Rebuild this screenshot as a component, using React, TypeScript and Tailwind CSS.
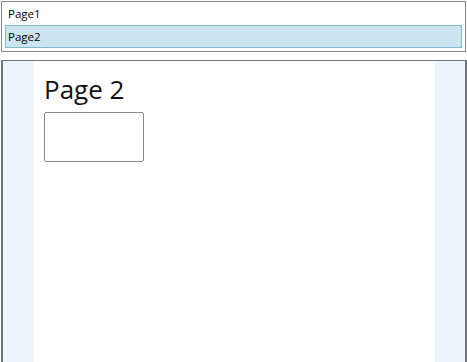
export default function App() {
  return (
    <div
      className="flex h-[362px] w-[467px] flex-col overflow-hidden bg-white"
      style={{ fontFamily: '"Open Sans", "Liberation Sans", sans-serif' }}
    >
      <div className="mt-px ml-px h-[51px] w-[465px] border border-[#828790] bg-white px-[3px] pt-[1px]">
        <div className="flex h-[21px] items-center pl-[3px] text-[11.5px] text-black">Page1</div>
        <div className="mt-px flex h-[23px] items-center border border-[#80b9d0] bg-[#cce6f1] pl-[2px] text-[11.5px] text-black">
          Page2
        </div>
      </div>
      <div className="mt-[8px] ml-px flex min-h-0 w-[466px] flex-1 border-t border-r-2 border-l-2 border-[#6f7479]">
        <div className="w-[31px] bg-[#eef6fd]" />
        <div className="flex-1 bg-white pl-[10px] pt-[10px]">
          <div className="text-[26px] leading-[36px] text-[#111]">Page 2</div>
          <div className="mt-[5px] h-[50px] w-[100px] rounded-[2px] border border-[#8a8a8a] bg-white" />
        </div>
        <div className="w-[30px] bg-[#eef6fd]" />
      </div>
    </div>
  );
}
